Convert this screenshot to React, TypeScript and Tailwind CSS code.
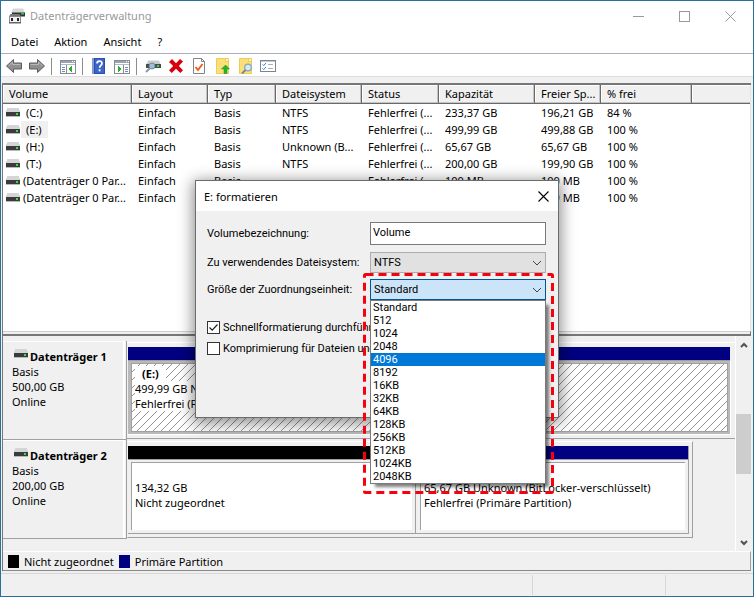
import React from "react";

const volumes = [
  { name: "(C:)", fs: "NTFS", status: "Fehlerfrei (...", cap: "233,37 GB", free: "196,21 GB", pct: "84 %" },
  { name: "(E:)", fs: "NTFS", status: "Fehlerfrei (...", cap: "499,99 GB", free: "499,88 GB", pct: "100 %", selected: true },
  { name: "(H:)", fs: "Unknown (B...", status: "Fehlerfrei (...", cap: "65,67 GB", free: "65,67 GB", pct: "100 %" },
  { name: "(T:)", fs: "NTFS", status: "Fehlerfrei (...", cap: "200,00 GB", free: "199,90 GB", pct: "100 %" },
  { name: "(Datenträger 0 Par...", fs: "", status: "Fehlerfrei (...", cap: "100 MB", free: "100 MB", pct: "100 %", wide: true },
  { name: "(Datenträger 0 Par...", fs: "", status: "Fehlerfrei (...", cap: "499 MB", free: "499 MB", pct: "100 %", wide: true },
];

const headers = ["Volume", "Layout", "Typ", "Dateisystem", "Status", "Kapazität", "Freier Sp...", "% frei"];

const sizes = ["Standard", "512", "1024", "2048", "4096", "8192", "16KB", "32KB", "64KB", "128KB", "256KB", "512KB", "1024KB", "2048KB"];

function DriveIcon() {
  return (
    <svg width="14" height="9" viewBox="0 0 14 9" shapeRendering="crispEdges" className="shrink-0" aria-hidden="true">
      <path d="M1 0H13L14 4H0Z" fill="#d3d5d8" />
      <rect x="0" y="4" width="14" height="4" fill="#3b3b3b" />
      <rect x="0" y="8" width="14" height="1" fill="#b9b9b9" />
      <rect x="10" y="5" width="2" height="2" fill="#2fe04a" />
    </svg>
  );
}

function AppIcon() {
  return (
    <svg width="16" height="16" viewBox="0 0 16 16" aria-hidden="true">
      <path d="M4 0.5H14L16 5H2Z" fill="#d5d7da" />
      <rect x="3" y="4.5" width="13" height="4" fill="#333" />
      <rect x="12" y="5" width="3" height="1.5" fill="#24d044" />
      <path d="M0 8.5L1.5 6H10.5L12 8.5Z" fill="#777" />
      <rect x="0.5" y="8.5" width="11" height="6" fill="#f2f2f2" stroke="#8b8b8b" />
      <rect x="0" y="14" width="12" height="1.5" fill="#666" />
      <rect x="2" y="10" width="2" height="3" fill="#222" />
      <rect x="8" y="10" width="2" height="3" fill="#222" />
    </svg>
  );
}

function Arrow({ flip }: { flip?: boolean }) {
  return (
    <svg width="16" height="16" viewBox="0 0 16 16" aria-hidden="true">
      <path
        d={flip ? "M15.5 8L8.5 1.5V5H0.5V11H8.5V14.5Z" : "M0.5 8L7.5 1.5V5H15.5V11H7.5V14.5Z"}
        fill="#8f8f8f"
        stroke="#5c5c5c"
      />
      <path d={flip ? "M1.5 6.5H9.5V4L13.5 8" : "M14.5 6.5H6.5V4L2.5 8"} fill="none" stroke="#b8b8b8" />
    </svg>
  );
}

function PaneIcon({ right }: { right?: boolean }) {
  return (
    <svg width="16" height="16" viewBox="0 0 16 16" shapeRendering="crispEdges" aria-hidden="true">
      <rect x="0.5" y="2.5" width="15" height="13" fill="#fff" stroke="#848b96" />
      <rect x="1" y="3" width="14" height="2" fill="#9aa4b3" />
      <rect x="12" y="3" width="1" height="1" fill="#fff" />
      <rect x="14" y="3" width="1" height="1" fill="#fff" />
      <rect x="1" y="6" width="14" height="1" fill="#b3bac5" />
      {right ? (
        <>
          <rect x="9" y="7" width="1" height="8" fill="#848b96" />
          <path d="M11 9H14M11 11H14M11 13H14" stroke="#7189b5" transform="translate(0 .5)" />
          <path d="M4 8V14L8 11Z" fill="#2cae28" />
        </>
      ) : (
        <>
          <rect x="6" y="7" width="1" height="8" fill="#848b96" />
          <path d="M2 9H5M2 11H5M2 13H5" stroke="#7189b5" transform="translate(0 .5)" />
          <path d="M12 8V14L8 11Z" fill="#2cae28" />
        </>
      )}
    </svg>
  );
}

function HelpIcon() {
  return (
    <svg width="16" height="16" viewBox="0 0 16 16" aria-hidden="true">
      <rect x="1" y="0" width="13" height="16" fill="#2b4fb0" />
      <rect x="1" y="0" width="2" height="16" fill="#8299d6" />
      <rect x="4" y="1" width="9" height="14" fill="#3d66c9" />
      <path d="M6 5.5C6 2.3 11 2.3 11 5.2C11 7.4 8.6 7.4 8.6 9.8" fill="none" stroke="#fff" strokeWidth="1.7" />
      <rect x="7.7" y="11.3" width="1.8" height="2" fill="#fff" />
    </svg>
  );
}

function DiskSearchIcon() {
  return (
    <svg width="16" height="16" viewBox="0 0 16 16" aria-hidden="true">
      <path d="M3 2.5H14L15.5 6H1.5Z" fill="#c9cccf" />
      <rect x="1" y="6" width="15" height="4" fill="#4a4a4a" />
      <rect x="12" y="7" width="2" height="2" fill="#2ddb48" />
      <circle cx="7" cy="8" r="3" fill="#9fc0d4" stroke="#6d8799" />
      <path d="M4.8 10.2L1 14" stroke="#8a9aa8" strokeWidth="2" />
    </svg>
  );
}

function DeleteIcon() {
  return (
    <svg width="16" height="16" viewBox="0 0 16 16" aria-hidden="true">
      <path d="M1 4L4 1L8 5.2L12 1L15 3.5L10.8 8L15 12.3L12.3 15L8 10.8L3.8 15L1 12.3L5.2 8Z" fill="#d8000c" />
    </svg>
  );
}

function DocIcon() {
  return (
    <svg width="16" height="16" viewBox="0 0 16 16" aria-hidden="true">
      <path d="M2.5 0.5H10.5L13.5 3.5V15.5H2.5Z" fill="#fff" stroke="#848484" />
      <path d="M10.5 0.5V3.5H13.5" fill="none" stroke="#848484" />
      <path d="M4.5 9L7 12L11.5 6" fill="none" stroke="#ee5a1c" strokeWidth="1.8" />
    </svg>
  );
}

function FolderIcon({ search }: { search?: boolean }) {
  return (
    <svg width="16" height="16" viewBox="0 0 16 16" aria-hidden="true">
      <path d="M2.5 0.5H14.5V15.5H2.5Z" fill="#fbdf77" stroke="#efcb5c" />
      <path d="M11.5 0.5V3.5H14.5V0.5Z" fill="#fff3bd" stroke="#efcb5c" />
      {search ? (
        <>
          <circle cx="11" cy="9.5" r="3.3" fill="#d4e8f5" stroke="#83a5bd" strokeWidth="1.2" />
          <path d="M8.5 12L5 15.5" stroke="#6e879b" strokeWidth="1.8" />
        </>
      ) : (
        <path d="M11.5 7L15.5 11H13V15.5H10V11H7.5Z" fill="#27b32a" stroke="#1b951e" strokeWidth="0.5" />
      )}
    </svg>
  );
}

function ListIcon() {
  return (
    <svg width="16" height="16" viewBox="0 0 16 16" aria-hidden="true">
      <rect x="0.5" y="2.5" width="15" height="11" fill="#fff" stroke="#7c858f" />
      <rect x="1" y="3" width="14" height="1" fill="#c6ccd3" />
      <path d="M2.5 6.3L3.7 7.5L6 5M2.5 10.3L3.7 11.5L6 9" fill="none" stroke="#2f7fd0" />
      <path d="M8 6.5H13M8 10.5H13" stroke="#a9afb6" />
    </svg>
  );
}

function Tool({ label, children }: { label: string; children: React.ReactNode }) {
  return (
    <button type="button" aria-label={label} className="w-[23px] pl-[3px]">
      {children}
    </button>
  );
}

function ToolSeparator() {
  return <span className="ml-0.5 mr-[5px] h-[17px] w-px bg-[#8d8d8d]" />;
}

function DiskInfo({ name, size }: { name: string; size: string }) {
  return (
    <div className="flex w-[124px] shrink-0 border-b border-[#a0a0a0]">
      <div className="flex-1 border-r-2 border-t border-white pl-[9px] pt-[7px]">
        <div className="flex h-[15px] gap-0.5 pl-0.5">
          <DriveIcon />
          <h2 className="font-bold leading-[15px]">{name}</h2>
        </div>
        <p>Basis</p>
        <p>{size}</p>
        <p>Online</p>
      </div>
      <div className="ml-px w-px bg-[#a0a0a0]" />
    </div>
  );
}

function Chevron() {
  return (
    <svg width="10" height="6" viewBox="0 0 10 6" className="pointer-events-none absolute right-1 top-2" aria-hidden="true">
      <path d="M1 1L5 5L9 1" fill="none" stroke="#444" />
    </svg>
  );
}

function FormatDialog() {
  return (
    <section
      role="dialog"
      aria-label="E: formatieren"
      className="absolute left-[194px] top-[179px] h-[238px] w-[364px] border border-[#6b6b6b] bg-[#f0f0f0] shadow-[0_3px_14px_2px_rgba(0,0,0,0.45)]"
    >
      <header className="flex h-[30px] items-center justify-between bg-white pl-2">
        <h2>E: formatieren</h2>
        <button type="button" aria-label="Schließen" className="flex h-[30px] w-[30px] items-center justify-center">
          <svg width="11" height="11" viewBox="0 0 11 11" aria-hidden="true">
            <path d="M0.5 0.5L10.5 10.5M10.5 0.5L0.5 10.5" stroke="#000" strokeWidth="1.1" />
          </svg>
        </button>
      </header>
      <form className="px-[11px] pt-[11px] font-[Roboto,'Liberation_Sans',sans-serif] text-[11px] leading-[13px]">
        <div className="flex h-[23px] items-center">
          <label htmlFor="label" className="w-[163px]">Volumebezeichnung:</label>
          <input id="label" defaultValue="Volume" className="h-[23px] w-[176px] border border-[#7a7a7a] bg-white px-0.5 pb-0.5 outline-none" />
        </div>
        <div className="mt-[7px] flex h-[21px] items-center">
          <label htmlFor="fs" className="w-[163px]">Zu verwendendes Dateisystem:</label>
          <div className="relative">
            <select id="fs" className="block h-[21px] w-[176px] appearance-none border border-[#adadad] bg-[#e1e1e1] px-[3px] outline-none">
              <option>NTFS</option>
            </select>
            <Chevron />
          </div>
        </div>
        <div className="mt-1.5 flex h-[21px] items-center">
          <label htmlFor="unit" className="w-[163px]">Größe der Zuordnungseinheit:</label>
          <div className="relative">
            <select id="unit" className="block h-[21px] w-[176px] appearance-none border border-[#005499] bg-[#cce4f7] px-[3px] outline-none">
              {sizes.map((s) => (
                <option key={s}>{s}</option>
              ))}
            </select>
            <Chevron />
            <ul
              role="listbox"
              aria-label="Größe der Zuordnungseinheit"
              className="absolute left-0 top-full z-10 w-full border border-[#7a7a7a] bg-white shadow-[4px_4px_3px_-1px_rgba(0,0,0,0.5)]"
            >
              {sizes.map((s) => (
                <li
                  key={s}
                  role="option"
                  aria-selected={s === "4096"}
                  className={s === "4096" ? "h-[13px] bg-[#0078d7] px-0.5 text-white" : "h-[13px] px-0.5"}
                >
                  {s}
                </li>
              ))}
            </ul>
            <svg width="191" height="221" viewBox="0 0 191 221" className="pointer-events-none absolute -left-[7px] -top-1.5 z-20 max-w-none" aria-hidden="true">
              <rect x="1.5" y="1.5" width="188" height="218" rx="1" fill="none" stroke="#f8000f" strokeWidth="3" strokeDasharray="8 5" />
            </svg>
          </div>
        </div>
        <div className="mt-[21px] flex flex-col gap-2">
          <label className="flex h-[13px] items-center gap-[3px] whitespace-nowrap">
            <input type="checkbox" defaultChecked className="size-[13px] appearance-none border border-[#333] bg-white" />
            <svg width="13" height="13" viewBox="0 0 13 13" className="-ml-4" aria-hidden="true">
              <path d="M2.5 6.5L5.2 9.2L10.5 3.5" fill="none" stroke="#222" strokeWidth="1.2" />
            </svg>
            Schnellformatierung durchführe
          </label>
          <label className="flex h-[13px] items-center gap-[3px] whitespace-nowrap">
            <input type="checkbox" className="size-[13px] appearance-none border border-[#333] bg-white" />
            Komprimierung für Dateien und
          </label>
        </div>
      </form>
    </section>
  );
}

export default function App() {
  return (
    <div className="relative flex min-h-screen flex-col border border-[#2a6f9e] bg-[#f0f0f0] font-['Noto_Sans','Open_Sans',sans-serif] text-[11px] leading-[15px] text-black">
      <header className="flex h-[30px] items-center bg-white pl-2">
        <AppIcon />
        <h1 className="ml-[5px] flex-1 pb-px text-[#999]">Datenträgerverwaltung</h1>
        <button type="button" aria-label="Minimieren" className="flex w-[46px] justify-center">
          <svg width="11" height="11" viewBox="0 0 11 11"><path d="M0 5.5H11" stroke="#999" /></svg>
        </button>
        <button type="button" aria-label="Maximieren" className="flex w-[46px] justify-center">
          <svg width="11" height="11" viewBox="0 0 11 11"><rect x="0.5" y="0.5" width="10" height="10" fill="none" stroke="#999" /></svg>
        </button>
        <button type="button" aria-label="Schließen" className="flex w-[46px] justify-center">
          <svg width="11" height="11" viewBox="0 0 11 11"><path d="M0.5 0.5L10.5 10.5M10.5 0.5L0.5 10.5" stroke="#999" /></svg>
        </button>
      </header>
      <nav className="flex h-[23px] items-center border-b border-[#a9b0bb] bg-white pb-0.5 pl-0.5">
        {["Datei", "Aktion", "Ansicht", "?"].map((m) => (
          <button key={m} type="button" className="px-2">{m}</button>
        ))}
      </nav>
      <div className="flex h-[23px] items-center border-b border-[#dedede] bg-white pl-0.5 pt-0.5" role="toolbar">
        <Tool label="Zurück"><Arrow /></Tool>
        <Tool label="Vorwärts"><Arrow flip /></Tool>
        <ToolSeparator />
        <Tool label="Konsolenstruktur"><PaneIcon /></Tool>
        <ToolSeparator />
        <Tool label="Hilfe"><HelpIcon /></Tool>
        <Tool label="Aktionsbereich"><PaneIcon right /></Tool>
        <ToolSeparator />
        <Tool label="Datenträger"><DiskSearchIcon /></Tool>
        <Tool label="Löschen"><DeleteIcon /></Tool>
        <Tool label="Eigenschaften"><DocIcon /></Tool>
        <Tool label="Nach oben"><FolderIcon /></Tool>
        <Tool label="Suchen"><FolderIcon search /></Tool>
        <Tool label="Liste"><ListIcon /></Tool>
      </div>

      <main className="ml-px mr-0.5 mt-1.5 flex flex-1 flex-col border-l border-t-2 border-[#777]">
        <div className="flex-1 border-r border-[#e3e3e3] bg-white">
          <table className="w-full table-fixed border-collapse text-left">
            <colgroup>
              <col className="w-[129px]" />
              <col className="w-[76px]" />
              <col className="w-[68px]" />
              <col className="w-[86px]" />
              <col className="w-[77px]" />
              <col className="w-[96px]" />
              <col className="w-[66px]" />
              <col className="w-[91px]" />
              <col />
            </colgroup>
            <thead>
              <tr>
                {headers.map((h) => (
                  <th key={h} scope="col" className="h-[19px] whitespace-nowrap bg-[#f0f0f0] p-0 pb-0.5 pl-1.5 font-normal shadow-[inset_-1px_-1px_0_#696969,inset_-2px_-2px_0_#c4c4c4,inset_1px_1px_0_#fff]">
                    {h}
                  </th>
                ))}
                <td className="bg-[#f0f0f0] shadow-[inset_0_-1px_0_#696969,inset_0_-2px_0_#c4c4c4,inset_1px_1px_0_#fff]" />
              </tr>
            </thead>
            <tbody>
              {volumes.map((v, i) => (
                <tr key={i} className="whitespace-nowrap">
                  <td className="h-[17px] p-0">
                    <div className="flex items-center pl-[3px]">
                      <DriveIcon />
                      <span className={v.selected ? "ml-px bg-[#f0f0f0] pl-[5px] pr-1.5 leading-[17px]" : v.wide ? "pl-[3px] leading-[17px]" : "pl-1.5 leading-[17px]"}>{v.name}</span>
                    </div>
                  </td>
                  <td className="p-0 pl-1.5">Einfach</td>
                  <td className="p-0 pl-1.5">Basis</td>
                  <td className="p-0 pl-1.5">{v.fs}</td>
                  <td className="p-0 pl-1.5">{v.status}</td>
                  <td className="p-0 pl-1.5">{v.cap}</td>
                  <td className="p-0 pl-1.5">{v.free}</td>
                  <td className="p-0 pl-1.5">{v.pct}</td>
                  <td />
                </tr>
              ))}
            </tbody>
          </table>
        </div>
        <div className="h-[5px] border-b-2 border-r border-t border-b-[#777] border-r-[#777] border-t-[#d0d0d0]" />

        <div className="flex">
          <div id="disks" className="flex-1 pb-3 pt-[5px]">
            <section className="flex h-[99px]">
              <DiskInfo name="Datenträger 1" size="500,00 GB" />
              <div className="mb-px mt-px flex-1 border-b border-t border-b-[#a0a0a0] border-t-white pl-px pr-1 pt-1">
                <div className="mr-px h-3.5 border-b border-[#a0a0a0] bg-[#000080]" />
                <div className="border-b border-r border-white bg-[#b9b9b9] py-0.5 pl-[3px] pr-0.5">
                  <div className="relative h-[69px] border border-[#a0a0a0] bg-white pl-[3px] pt-0.5">
                    <svg className="absolute inset-0 size-full" aria-hidden="true">
                      <defs>
                        <pattern id="hatch" width="8" height="8" patternUnits="userSpaceOnUse">
                          <path d="M-1 9L9 -1M-1 1L1 -1M7 9L9 7" stroke="#777" strokeWidth="0.8" />
                        </pattern>
                      </defs>
                      <rect width="100%" height="100%" fill="url(#hatch)" />
                    </svg>
                    <div className="relative flex flex-col items-start">
                      <h3 className="bg-white px-[7px] font-bold">(E:)</h3>
                      <p className="bg-white">499,99 GB NTFS</p>
                      <p className="bg-white">Fehlerfrei (Primäre Partition)</p>
                    </div>
                  </div>
                </div>
              </div>
            </section>
            <section className="flex h-[99px]">
              <DiskInfo name="Datenträger 2" size="200,00 GB" />
              <div className="mb-px mr-[42px] mt-px flex flex-1 border border-b-[#a0a0a0] border-l-transparent border-r-[#a0a0a0] border-t-white pb-[3px] pr-[3px] pt-1">
                <div className="flex-1 border-b border-r border-[#a0a0a0]">
                  <div className="h-3.5 border-b border-[#a0a0a0] bg-black" />
                  <div className="ml-[3px] mr-[3px] mt-0.5 h-[68px] border-l border-t border-[#a0a0a0] bg-white pl-[3px] pt-[17px]">
                    <p>134,32 GB</p>
                    <p>Nicht zugeordnet</p>
                  </div>
                </div>
                <div className="w-[273px] border-b border-r border-[#a0a0a0]">
                  <div className="h-3.5 border-b border-[#a0a0a0] bg-[#000080]" />
                  <div className="ml-1 mr-[3px] mt-0.5 h-[68px] border-l border-t border-[#a0a0a0] bg-white pl-[3px] pt-[17px]">
                    <p>65,67 GB Unknown (BitLocker-verschlüsselt)</p>
                    <p>Fehlerfrei (Primäre Partition)</p>
                  </div>
                </div>
              </div>
            </section>
          </div>
          <div className="flex w-4 flex-col items-center border-l border-white" role="scrollbar" aria-controls="disks" aria-valuenow={50}>
            <svg width="8" height="6" viewBox="0 0 8 6" className="mt-1.5" aria-hidden="true">
              <path d="M1 5L4 2L7 5" fill="none" stroke="#505050" strokeWidth="2" />
            </svg>
            <div className="mt-[66px] h-[60px] w-[15px] bg-[#cdcdcd]" />
            <svg width="8" height="6" viewBox="0 0 8 6" className="mb-[5px] mt-auto" aria-hidden="true">
              <path d="M1 1L4 4L7 1" fill="none" stroke="#505050" strokeWidth="2" />
            </svg>
          </div>
        </div>
        <div className="flex h-5 items-center border-b border-r border-t border-b-[#888] border-r-[#a0a0a0] border-t-white pl-[5px]">
          <span className="h-[13px] w-[11px] bg-black" />
          <span className="ml-[5px]">Nicht zugeordnet</span>
          <span className="ml-[5px] h-[13px] w-[11px] bg-[#000080]" />
          <span className="ml-[5px]">Primäre Partition</span>
        </div>
      </main>
      <footer className="mt-0.5 flex h-[23px] border-t border-[#d7d7d7]">
        <div className="flex-1" />
        <div className="my-px w-[133px] border-l border-[#d7d7d7]" />
        <div className="my-px w-[88px] border-l border-[#d7d7d7]" />
      </footer>
      <FormatDialog />
    </div>
  );
}
